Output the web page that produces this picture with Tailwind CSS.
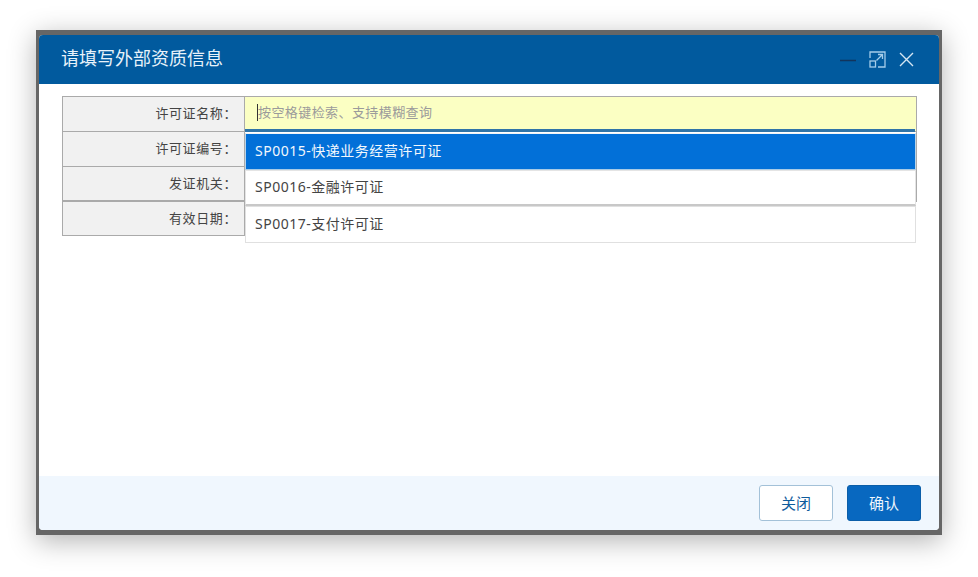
<!DOCTYPE html>
<html lang="zh-CN">
  <head>
    <meta charset="UTF-8" />
    <title>请填写外部资质信息</title>
    <script src="https://cdn.jsdelivr.net/npm/@tailwindcss/browser@4"></script>
  </head>
  <body class="bg-white h-[577px] overflow-hidden font-['Noto_Sans','Noto_Sans_CJK_SC',sans-serif]">
    <!-- 弹窗外框 -->
    <div class="ml-[36px] mt-[30px] w-[906px] h-[505px] bg-[#666666] pt-[5px] pb-[5px] pl-[3px] pr-[3px] shadow-[0_6px_26px_rgba(0,0,0,0.3)]">
      <div class="flex flex-col h-full w-full bg-white rounded-[4px] overflow-hidden">
        <!-- 标题栏 -->
        <div class="flex items-center justify-between h-[49px] shrink-0 bg-[#015a9e] pl-[23px] pr-[24px]">
          <h1 class="text-[18px] leading-[45px] h-[47px] -ml-px text-[#e8f2fa] font-normal">请填写外部资质信息</h1>
          <div class="flex items-center gap-[12px]">
            <svg width="17" height="17" viewBox="0 0 17 17" fill="none"><path d="M0 9.5H16" stroke="#12345c" stroke-width="1.6" /></svg>
            <svg width="17" height="17" viewBox="0 0 17 17" fill="none" stroke="#a5cdea" stroke-width="1.3">
              <path d="M1 7V1H16V16H9" />
              <rect x="1" y="10" width="5.5" height="6" />
              <path d="M7.5 9.5L13 4M9 3.5H13.5V8" />
            </svg>
            <svg width="17" height="17" viewBox="0 0 17 17" fill="none" stroke="#d5e6f3" stroke-width="1.4"><path d="M2 2L15 15M15 2L2 15" /></svg>
          </div>
        </div>

        <!-- 表单 -->
        <div class="relative flex-1 pt-[12px] pl-[23px] pr-[22px]">
          <div class="w-[855px] border-t border-[#aaaaaa]">
            <div class="flex h-[35px] border border-t-0 border-[#aaaaaa]">
              <div class="w-[182px] bg-[#f1f1f1] border-r border-[#aaaaaa] text-right pr-[7px] text-[13px] tracking-[0.6px] leading-[32px] text-[#444444]">许可证名称：</div>
              <div class="flex-1 bg-[#fbffc3] pl-[12px] flex items-start pt-[7px]">
                <span class="w-px h-[17px] bg-[#333333]"></span>
                <span class="text-[13px] tracking-[0.42px] leading-[17px] text-[#9b9b9b]">按空格键检索、支持模糊查询</span>
              </div>
            </div>
            <div class="flex h-[35px] border border-t-0 border-[#aaaaaa]">
              <div class="w-[182px] bg-[#f1f1f1] border-r border-[#aaaaaa] text-right pr-[7px] text-[13px] tracking-[0.6px] leading-[32px] text-[#444444]">许可证编号：</div>
            </div>
            <div class="flex h-[35px] border border-t-0 border-b-2 border-[#aaaaaa]">
              <div class="w-[182px] bg-[#f1f1f1] border-r border-[#aaaaaa] text-right pr-[7px] text-[13px] tracking-[0.6px] leading-[32px] text-[#444444]">发证机关：</div>
            </div>
            <div class="flex h-[34px] w-[184px] border border-t-0 border-[#aaaaaa]">
              <div class="w-[182px] bg-[#f1f1f1] border-r border-[#aaaaaa] text-right pr-[7px] text-[13px] tracking-[0.6px] leading-[32px] text-[#444444]">有效日期：</div>
            </div>
          </div>

          <!-- 下拉列表 -->
          <div class="absolute left-[206px] top-[45px] w-[671px]">
            <div class="h-[3px] bg-[#2f74a8] mr-[1px]"></div>
            <div class="h-px bg-white"></div>
            <div class="h-[37px] bg-[#0270d8] border border-[#f0f4f8] border-b-[#a9cbe6] border-l-[#b8d4ea] border-r-[#b8d4ea] pl-[9px] text-[14px] tracking-[0.5px] leading-[34px] text-[#f2f8fd]">SP0015-快递业务经营许可证</div>
            <div class="h-[36px] bg-white border border-[#e4e4e4] border-b-2 border-b-[#c8c8c8] pl-[9px] text-[14px] tracking-[0.5px] leading-[31px] text-[#444444]">SP0016-金融许可证</div>
            <div class="h-[37px] bg-white border border-[#e0e0e0] pl-[9px] text-[14px] tracking-[0.5px] leading-[33px] text-[#444444]">SP0017-支付许可证</div>
          </div>
        </div>

        <!-- 底部按钮 -->
        <div class="flex items-start justify-end gap-[14px] h-[54px] shrink-0 bg-[#f0f7fe] pt-[9px] pr-[18px]">
          <button class="w-[74px] h-[36px] bg-white border border-[#a3c1d8] rounded-[3px] text-[15px] text-[#0f5c9c]">关闭</button>
          <button class="w-[74px] h-[36px] bg-[#0868c0] border border-[#0b5ea8] rounded-[3px] text-[15px] text-[#eef6fd]">确认</button>
        </div>
      </div>
    </div>
  </body>
</html>
